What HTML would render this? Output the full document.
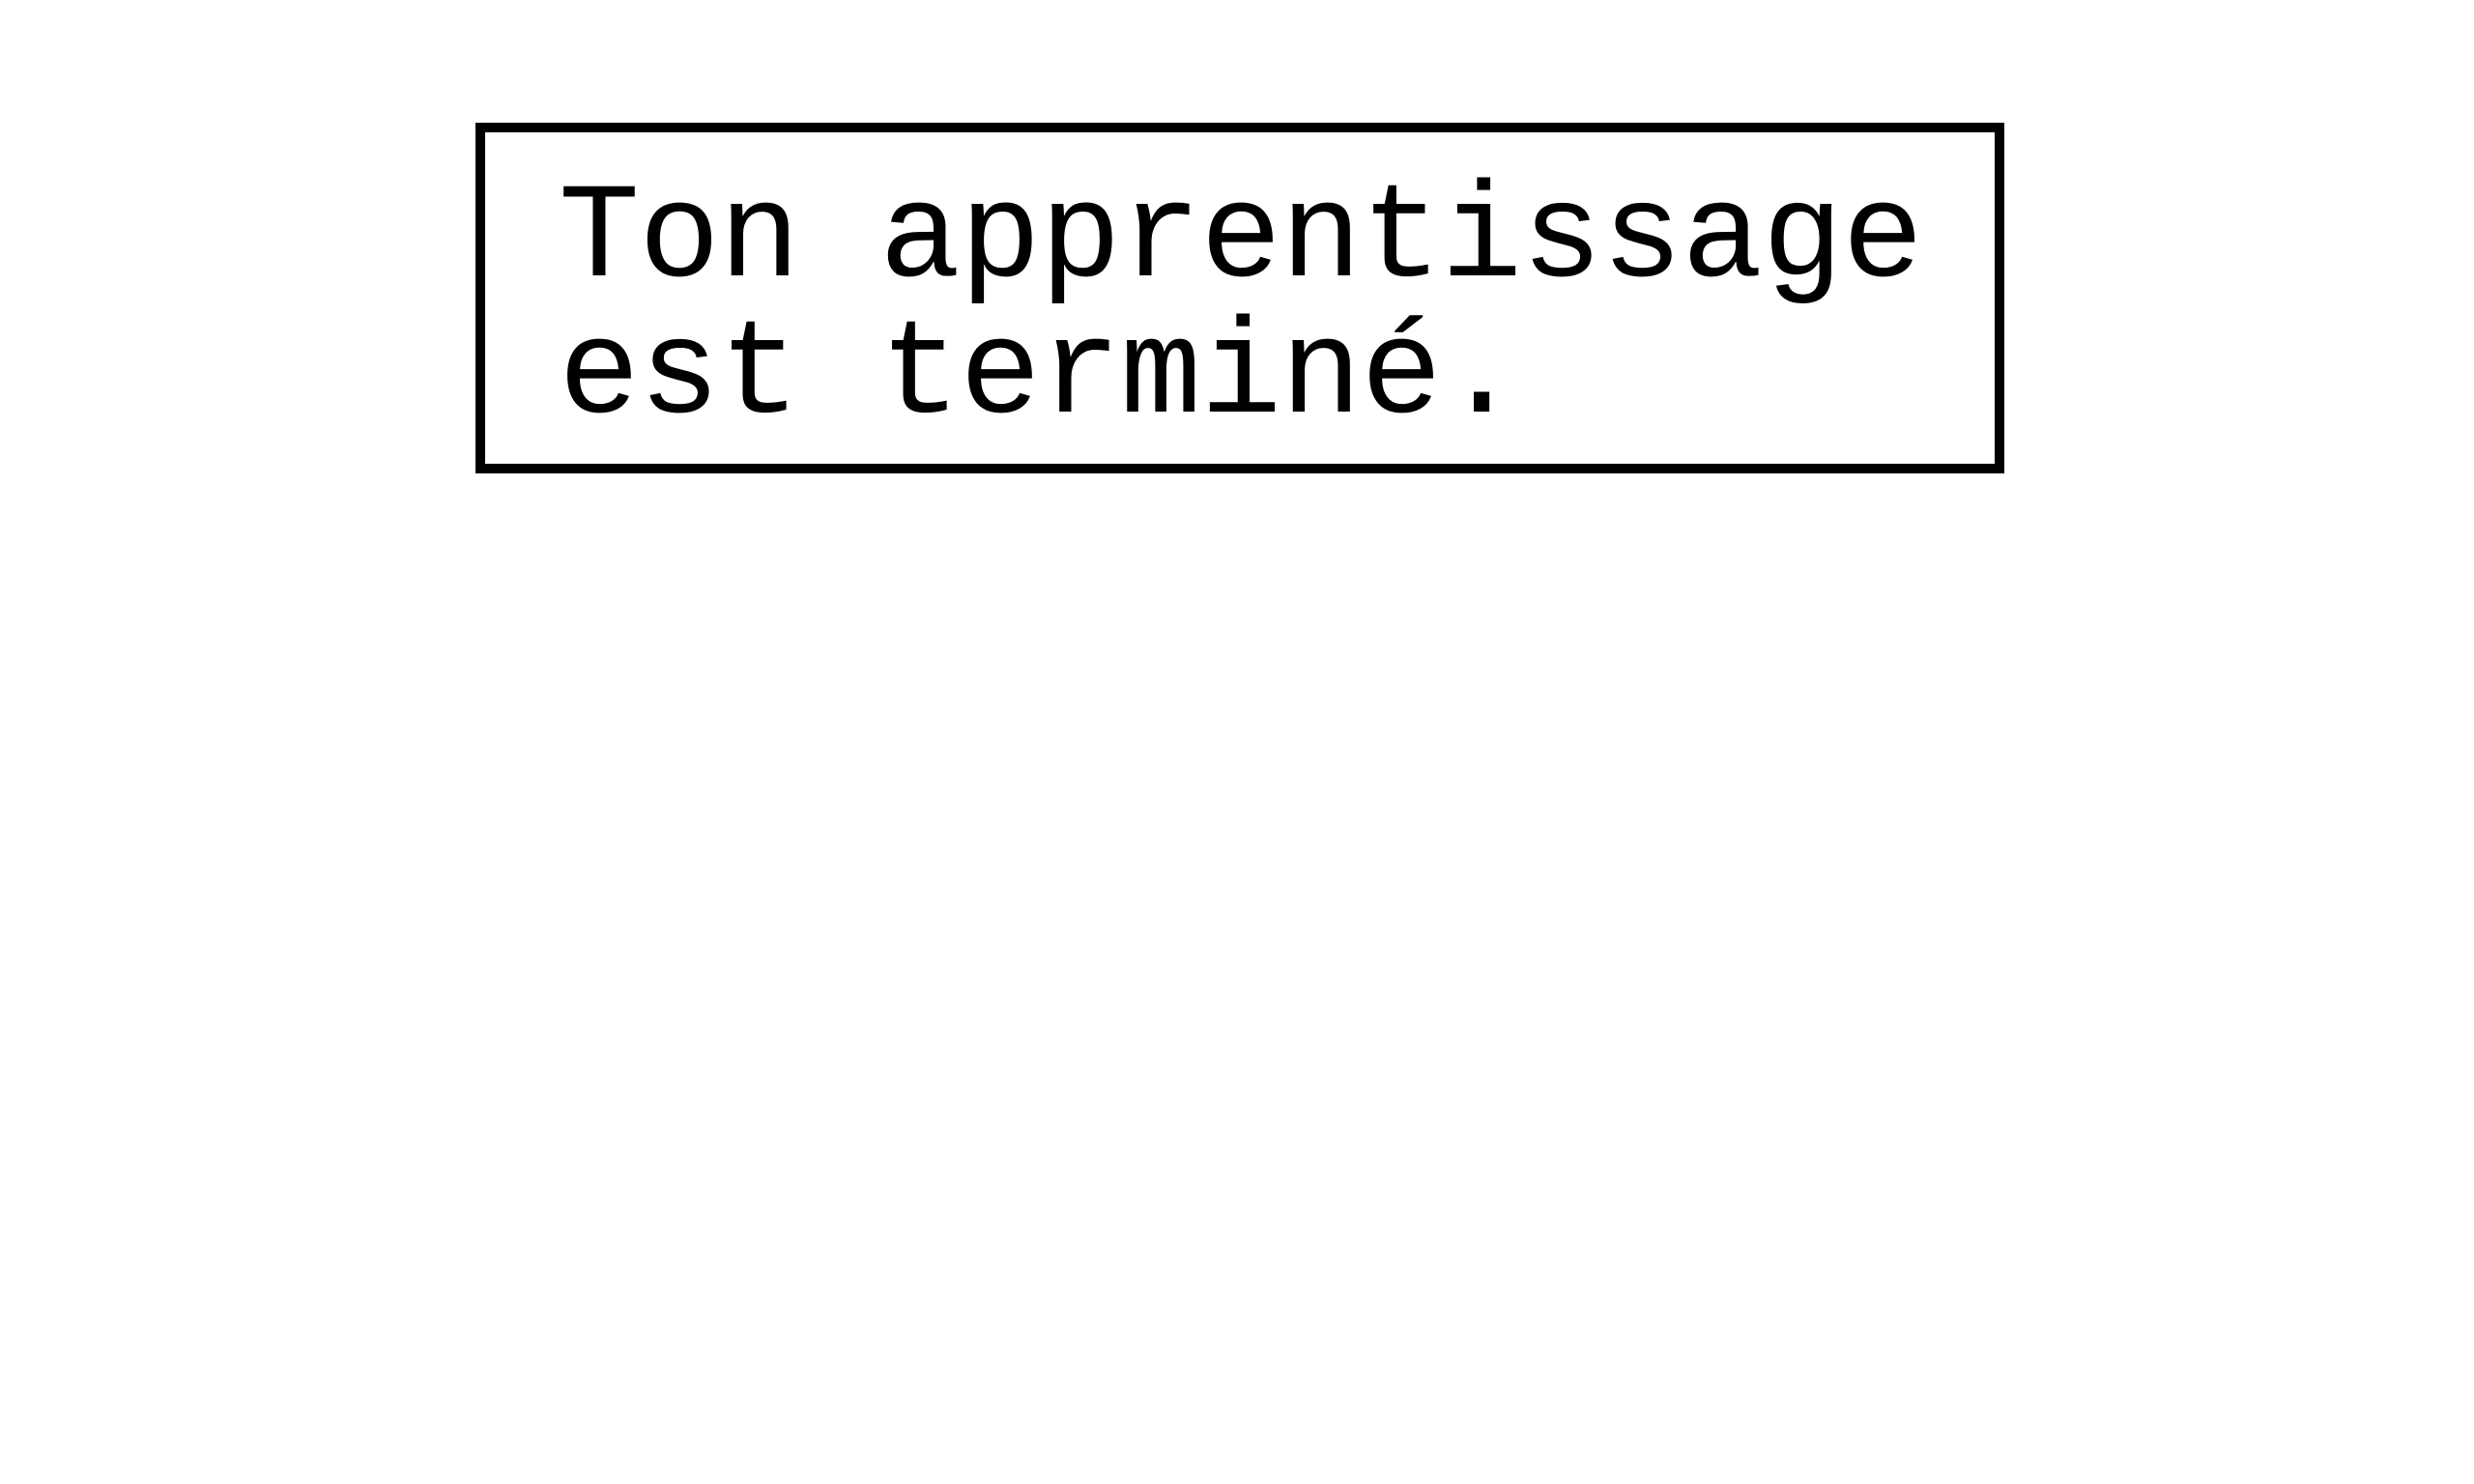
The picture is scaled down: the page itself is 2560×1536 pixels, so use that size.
<!DOCTYPE html>
<html>
<head>
<meta charset="utf-8">
<style>
  html, body { margin:0; padding:0; background:#fff; }
  body { width:2560px; height:1536px; position:relative; overflow:hidden; }
  .box {
    position:absolute;
    left:492px; top:127px;
    width:1562px; height:343px;
    border:10px solid #000;
    background:#fff;
  }
  .txt {
    position:absolute;
    left:578px; top:178px;
    font-family:"Liberation Mono", monospace;
    font-size:140px;
    line-height:141px;
    letter-spacing:-1.0px;
    color:#000;
    white-space:pre;
  }
</style>
</head>
<body>
  <div class="box"></div>
  <div class="txt">Ton apprentissage
est terminé.</div>
</body>
</html>
